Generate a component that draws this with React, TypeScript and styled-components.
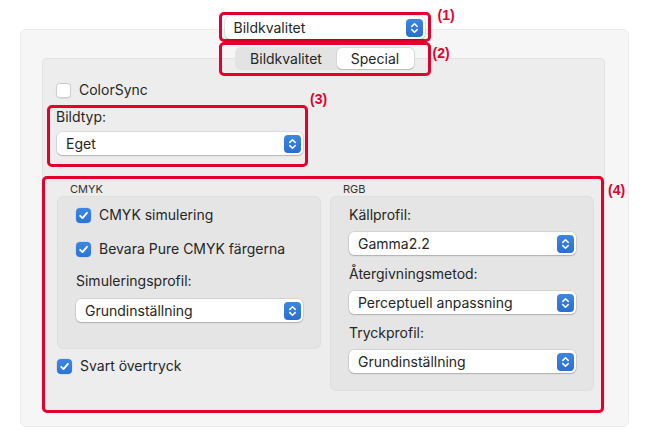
import React from 'react';
import styled, { createGlobalStyle } from 'styled-components';

const RED = '#e2012d';

const Global = createGlobalStyle`
  html, body { margin: 0; padding: 0; background: #fff; }
  body { font-family: Inter, "Noto Sans", sans-serif; color: #262626; -webkit-font-smoothing: antialiased; }
  *, *::before, *::after { box-sizing: border-box; }
`;

const Page = styled.div`
  width: 650px;
  height: 432px;
  padding: 29px 0 0 20px;
  background: #fff;
  overflow: hidden;
`;

const OuterPanel = styled.div`
  width: 609px;
  height: 398px;
  background: #f6f6f6;
  border: 1px solid #ececec;
  border-radius: 6px;
  display: flex;
  flex-direction: column;
`;

const Header = styled.div`
  position: relative;
  z-index: 1;
  margin-top: -18px;
  display: flex;
  flex-direction: column;
  align-items: center;
`;

const Frame = styled.div`
  position: relative;
  border: 3px solid ${RED};
  border-radius: 5px;
`;

const TopFrame = styled(Frame)`
  width: 212px;
  height: 30px;
  padding: 1px 3px;
`;

const TabFrame = styled(Frame)`
  width: 212px;
  height: 34px;
  padding: 2px 0 0 13px;
`;

const TypeFrame = styled(Frame)`
  width: 261px;
  margin: 6px 0 0 5px;
  padding: 1px 2px 9px 6px;
`;

const ColorFrame = styled(Frame)`
  width: 562px;
  height: 237px;
  margin-top: 9px;
  padding: 3px 7px 0 12px;
  display: grid;
  grid-template-columns: 264px 264px;
  column-gap: 9px;
  align-items: start;
`;

const Tag = styled.span<{ $left: number; $top: number }>`
  position: absolute;
  left: calc(100% + ${(p) => p.$left}px);
  top: ${(p) => p.$top}px;
  font-family: "Liberation Sans", Arial, sans-serif;
  font-weight: 700;
  font-size: 14px;
  line-height: 16px;
  color: ${RED};
  white-space: nowrap;
`;

const Popup = styled.div<{ $width?: number }>`
  width: ${(p) => (p.$width ? `${p.$width}px` : '100%')};
  height: 23px;
  background: #fff;
  border-radius: 5px;
  box-shadow: 0 0 0 0.5px rgba(0, 0, 0, 0.14), 0 1px 1.5px rgba(0, 0, 0, 0.18);
  display: flex;
  align-items: center;
  justify-content: space-between;
  padding: 0 2px 0 9px;
  font-size: 14px;
  line-height: 16px;
  color: #262626;
`;

const Stepper = styled.span`
  width: 17px;
  height: 18px;
  border-radius: 4px;
  background: linear-gradient(#3d86e0, #2a6fcf);
  display: flex;
  align-items: center;
  justify-content: center;
`;

const Segmented = styled.div`
  width: 180px;
  height: 23px;
  padding: 1px;
  border-radius: 6px;
  background: #e3e3e3;
  display: flex;
  font-size: 14px;
`;

const Segment = styled.div<{ $active?: boolean; $width: number }>`
  width: ${(p) => p.$width}px;
  height: 21px;
  border-radius: 5px;
  display: flex;
  align-items: center;
  justify-content: center;
  background: ${(p) => (p.$active ? '#fff' : 'transparent')};
  box-shadow: ${(p) => (p.$active ? '0 0 0 0.5px rgba(0,0,0,0.08), 0 1px 1px rgba(0,0,0,0.15)' : 'none')};
  color: #262626;
`;

const InnerPanel = styled.div`
  margin: -18px 0 0 21px;
  width: 563px;
  height: 354px;
  padding-top: 23px;
  background: #ededed;
  border-radius: 5px;
  box-shadow: inset 0 0 0 1px #e2e2e2;
`;

const CheckRow = styled.label<{ $indent?: number; $top?: number }>`
  display: flex;
  align-items: center;
  gap: 8px;
  height: 18px;
  margin-left: ${(p) => p.$indent ?? 0}px;
  margin-top: ${(p) => p.$top ?? 0}px;
  font-size: 14px;
  line-height: 16px;
  color: #262626;
`;

const Box = styled.span<{ $checked?: boolean }>`
  width: 15px;
  height: 15px;
  border-radius: 4px;
  flex: none;
  display: flex;
  align-items: center;
  justify-content: center;
  background: ${(p) => (p.$checked ? 'linear-gradient(#3b86e3, #2b74d9)' : '#fff')};
  box-shadow: ${(p) =>
    p.$checked ? '0 0 0 0.5px rgba(0,0,0,0.1)' : 'inset 0 0 0 1px #cdcdcd, 0 0.5px 1px rgba(0,0,0,0.08)'};
`;

const FieldLabel = styled.div<{ $top?: number }>`
  font-size: 14px;
  line-height: 16px;
  height: 16px;
  margin-top: ${(p) => p.$top ?? 0}px;
  color: #262626;
`;

const PopupSlot = styled.div<{ $top: number; $left?: number }>`
  margin-top: ${(p) => p.$top}px;
  margin-left: ${(p) => p.$left ?? 0}px;
`;

const Column = styled.div`
  display: flex;
  flex-direction: column;
`;

const GroupTitle = styled.div`
  font-size: 11px;
  line-height: 14px;
  height: 14px;
  padding-left: 13px;
  color: #333;
`;

const GroupBox = styled.div<{ $height: number; $padTop: number }>`
  height: ${(p) => p.$height}px;
  padding: ${(p) => p.$padTop}px 17px 0 18px;
  background: #e5e5e5;
  border: 1px solid #dfdfdf;
  border-radius: 6px;
  display: flex;
  flex-direction: column;
`;

const Check = () => (
  <svg width="11" height="11" viewBox="0 0 11 11">
    <path d="M2.2 5.8 L4.5 8.1 L8.9 2.8" fill="none" stroke="#fff" strokeWidth="1.9" strokeLinecap="round" strokeLinejoin="round" />
  </svg>
);

const Arrows = () => (
  <svg width="9" height="12" viewBox="0 0 9 12">
    <path d="M1.8 4.4 L4.5 1.8 L7.2 4.4 M1.8 7.6 L4.5 10.2 L7.2 7.6" fill="none" stroke="#fff" strokeWidth="1.5" strokeLinecap="round" strokeLinejoin="round" />
  </svg>
);

const Select = ({ value, width }: { value: string; width?: number }) => (
  <Popup $width={width}>
    <span>{value}</span>
    <Stepper>
      <Arrows />
    </Stepper>
  </Popup>
);

const CheckBox = ({ label, checked, indent, top }: { label: string; checked?: boolean; indent?: number; top?: number }) => (
  <CheckRow $indent={indent} $top={top}>
    <Box $checked={checked}>{checked && <Check />}</Box>
    <span>{label}</span>
  </CheckRow>
);

export default function App() {
  return (
    <>
      <Global />
      <Page>
        <OuterPanel>
          <Header>
            <TopFrame>
              <Select value="Bildkvalitet" width={200} />
              <Tag $left={10} $top={-8}>(1)</Tag>
            </TopFrame>
            <TabFrame>
              <Segmented>
                <Segment $width={101}>Bildkvalitet</Segment>
                <Segment $width={77} $active>Special</Segment>
              </Segmented>
              <Tag $left={5} $top={0}>(2)</Tag>
            </TabFrame>
          </Header>
          <InnerPanel>
            <CheckBox label="ColorSync" indent={14} />
            <TypeFrame>
              <FieldLabel>Bildtyp:</FieldLabel>
              <PopupSlot $top={7} $left={1}>
                <Select value="Eget" width={246} />
              </PopupSlot>
              <Tag $left={5} $top={-17}>(3)</Tag>
            </TypeFrame>
            <ColorFrame>
              <Column>
                <GroupTitle>CMYK</GroupTitle>
                <GroupBox $height={153} $padTop={9}>
                  <CheckBox label="CMYK simulering" checked />
                  <CheckBox label="Bevara Pure CMYK färgerna" checked top={16} />
                  <FieldLabel $top={15}>Simuleringsprofil:</FieldLabel>
                  <PopupSlot $top={10}>
                    <Select value="Grundinställning" />
                  </PopupSlot>
                </GroupBox>
                <CheckBox label="Svart övertryck" checked top={8} />
              </Column>
              <Column>
                <GroupTitle>RGB</GroupTitle>
                <GroupBox $height={195} $padTop={10}>
                  <FieldLabel>Källprofil:</FieldLabel>
                  <PopupSlot $top={9}>
                    <Select value="Gamma2.2" />
                  </PopupSlot>
                  <FieldLabel $top={11}>Återgivningsmetod:</FieldLabel>
                  <PopupSlot $top={9}>
                    <Select value="Perceptuell anpassning" />
                  </PopupSlot>
                  <FieldLabel $top={11}>Tryckprofil:</FieldLabel>
                  <PopupSlot $top={9}>
                    <Select value="Grundinställning" />
                  </PopupSlot>
                </GroupBox>
              </Column>
              <Tag $left={7} $top={3}>(4)</Tag>
            </ColorFrame>
          </InnerPanel>
        </OuterPanel>
      </Page>
    </>
  );
}
